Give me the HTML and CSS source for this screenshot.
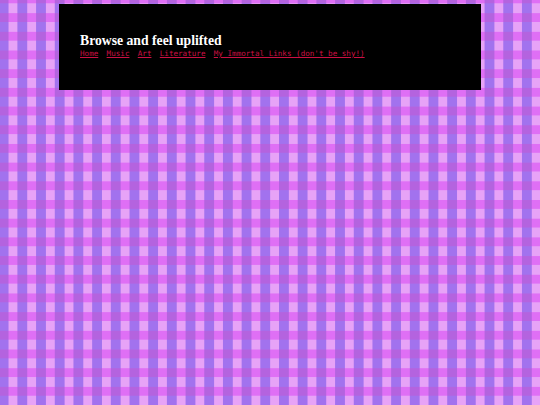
FILE: index.html
```html
<!DOCTYPE html>
<html>
<head>
<meta charset="utf-8">
<link rel="stylesheet" href="styles.css">
</head>
<body>
<header class="banner">
  <h1 class="title">Browse and feel uplifted</h1>
  <nav class="nav">
    <a href="#">Home</a>
    <a href="#">Music</a>
    <a href="#">Art</a>
    <a href="#">Literature</a>
    <a href="#">My Immortal Links (don't be shy!)</a>
  </nav>
</header>
</body>
</html>
```

FILE: styles.css
```css
html, body {
  margin: 0;
  padding: 0;
}
body {
  min-height: 405px;
  background-color: #e070f4;
  background-image: conic-gradient(from 0deg at 50% 50%,
    #e7a3f7 0deg 90deg,
    #df6ff5 90deg 180deg,
    #b463df 180deg 270deg,
    #a272ee 270deg 360deg);
  background-size: 18.7px 18.7px;
  background-position: -1.3px 3.3px;
  padding-top: 4px;
  box-sizing: border-box;
}
.banner {
  width: 422px;
  height: 86px;
  margin: 0 auto;
  background: #000;
  box-sizing: border-box;
  padding: 29px 21px 0 21px;
}
.title {
  margin: 0;
  font-family: "Liberation Serif", "Times New Roman", serif;
  font-weight: bold;
  font-size: 13.7px;
  line-height: 15px;
  color: #fff;
}
.nav {
  display: flex;
  gap: 8.3px;
  margin-top: 1px;
  font-family: "DejaVu Sans Mono", monospace;
  font-size: 7.6px;
  line-height: 9px;
}
.nav a {
  color: #cc1044;
  text-decoration: underline;
}
```
